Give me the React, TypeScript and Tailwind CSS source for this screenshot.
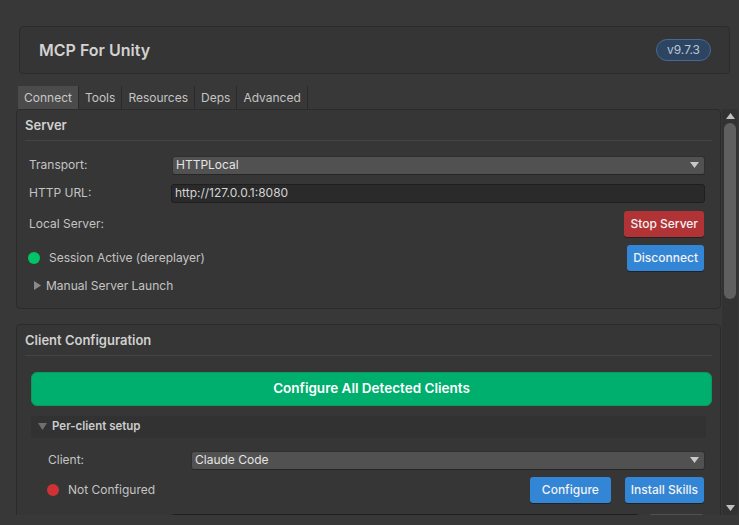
import React from 'react';

const font = { fontFamily: 'Inter, "Noto Sans", "Liberation Sans", sans-serif' };

function Dropdown({ value }: { value: string }) {
  return (
    <div className="flex h-[19px] flex-1 items-center justify-between rounded-[3px] border border-[#303030] border-b-[#262626] bg-[#515151] pl-[3px] pr-[5px] text-[12px] text-[#e4e4e4]">
      <span>{value}</span>
      <svg width="9" height="6" viewBox="0 0 9 6"><path d="M0 0h9L4.5 6z" fill="#c8c8c8" /></svg>
    </div>
  );
}

function Btn({ color, children }: { color: 'red' | 'blue'; children: React.ReactNode }) {
  const bg = color === 'red' ? 'bg-[#b23335]' : 'bg-[#3385d6]';
  return (
    <button className={`${bg} h-[26px] rounded-[3px] px-[6px] text-[12px] font-medium text-[#f2f2f2] shadow-[0_1px_0_#222]`}>
      {children}
    </button>
  );
}

export default function App(): React.ReactElement {
  const tabs = ['Connect', 'Tools', 'Resources', 'Deps', 'Advanced'];
  return (
    <div style={font} className="flex h-[525px] w-[739px] flex-col overflow-hidden bg-[#383838] text-[12px] text-[#c4c4c4]">
      <div className="ml-[19px] mt-[26px] flex h-[48px] w-[711px] items-center justify-between rounded-[4px] border border-[#2b2b2b] bg-[#353535] pl-[19px] pr-[18px]">
        <span className="text-[16px] font-semibold text-[#d2d2d2]">MCP For Unity</span>
        <span className="rounded-full border border-[#44699a] bg-[#2d4560] px-[10px] py-[1px] text-[12px] text-[#b8c8dc]">v9.7.3</span>
      </div>

      <div className="ml-[18px] mt-[12px] flex h-[23px] items-stretch text-[12px]">
        {tabs.map((t, i) => (
          <div
            key={t}
            className={`flex items-center border-r border-[#2a2a2a] px-[6px] ${i === 0 ? 'bg-[#4b4b4b] text-[#c8c8c8]' : 'bg-[#383838] text-[#c4c4c4]'}`}
          >
            {t}
          </div>
        ))}
      </div>

      <div className="ml-[16px] flex h-[406px] w-[723px]">
        <div className="flex w-[705px] flex-col gap-[15px] overflow-hidden">
          <div className="flex h-[200px] shrink-0 flex-col rounded-[4px] border border-[#2b2b2b] bg-[#363636] px-[8px]">
            <div className="pb-[4px] pt-[6px] text-[13px] font-semibold text-[#d0d0d0]">Server</div>
            <div className="h-px bg-[#444]" />
            <div className="mt-[15px] flex items-center pl-[4px] pr-[7px]">
              <span className="w-[143px]">Transport:</span>
              <Dropdown value="HTTPLocal" />
            </div>
            <div className="mt-[9px] flex items-center pl-[4px] pr-[7px]">
              <span className="w-[142px]">HTTP URL:</span>
              <div className="flex h-[19px] flex-1 items-center rounded-[3px] border border-[#1f1f1f] bg-[#2a2a2a] pl-[3px] text-[12px] text-[#d4d4d4]">http://127.0.0.1:8080</div>
            </div>
            <div className="mt-[8px] flex items-center justify-between pl-[4px] pr-[8px]">
              <span>Local Server:</span>
              <Btn color="red">Stop Server</Btn>
            </div>
            <div className="mt-[8px] flex items-center justify-between pl-[3px] pr-[8px]">
              <div className="flex items-center gap-[9px]">
                <span className="h-[12px] w-[12px] rounded-full bg-[#00c465]" />
                <span>Session Active (dereplayer)</span>
              </div>
              <Btn color="blue">Disconnect</Btn>
            </div>
            <div className="mt-[6px] flex items-center gap-[5px] pl-[9px]">
              <svg width="7" height="9" viewBox="0 0 7 9"><path d="M0 0l7 4.5L0 9z" fill="#8a8a8a" /></svg>
              <span>Manual Server Launch</span>
            </div>
          </div>

          <div className="flex shrink-0 flex-col rounded-[4px] border border-[#2b2b2b] bg-[#363636] px-[8px] pb-[20px]">
            <div className="pb-[4px] pt-[6px] text-[13px] font-semibold text-[#d0d0d0]">Client Configuration</div>
            <div className="h-px bg-[#444]" />
            <button className="ml-[6px] mt-[16px] h-[34px] rounded-[6px] border border-[#0a9a5e] bg-[#00ae6d] text-[13.5px] font-semibold text-white">
              Configure All Detected Clients
            </button>
            <div className="ml-[6px] mr-[6px] mt-[10px] flex h-[22px] items-center gap-[5px] rounded-[3px] bg-[#323232] pl-[7px] text-[11.5px] font-semibold text-[#cccccc]">
              <svg width="9" height="7" viewBox="0 0 9 7"><path d="M0 0h9L4.5 7z" fill="#6f6f6f" /></svg>
              <span>Per-client setup</span>
            </div>
            <div className="mt-[13px] flex items-center pl-[23px] pr-[7px]">
              <span className="w-[143px]">Client:</span>
              <Dropdown value="Claude Code" />
            </div>
            <div className="mt-[7px] flex items-center justify-between pl-[22px] pr-[8px]">
              <div className="flex items-center gap-[9px]">
                <span className="h-[12px] w-[12px] rounded-full bg-[#cf3235]" />
                <span>Not Configured</span>
              </div>
              <div className="flex gap-[14px]">
                <Btn color="blue"><span className="px-[6px]">Configure</span></Btn>
                <Btn color="blue">Install Skills</Btn>
              </div>
            </div>
            <div className="mt-[11px] flex items-center gap-[10px] pl-[146px] pr-[8px]">
              <div className="h-[19px] flex-1 rounded-[3px] border border-[#1f1f1f] bg-[#2a2a2a]" />
              <div className="h-[19px] w-[55px] rounded-[3px] bg-[#515151]" />
            </div>
          </div>
        </div>

        <div className="ml-px flex w-[16px] flex-col items-center bg-[#323232] pb-[4px] pt-[4px]">
          <svg width="9" height="6" viewBox="0 0 9 6"><path d="M4.5 0L9 6H0z" fill="#c0c0c0" /></svg>
          <div className="mt-[4px] h-[176px] w-[12px] rounded-full bg-[#5f5f5f]" />
          <div className="flex-1" />
          <svg width="9" height="6" viewBox="0 0 9 6"><path d="M0 0h9L4.5 6z" fill="#c0c0c0" /></svg>
        </div>
      </div>
    </div>
  );
}
